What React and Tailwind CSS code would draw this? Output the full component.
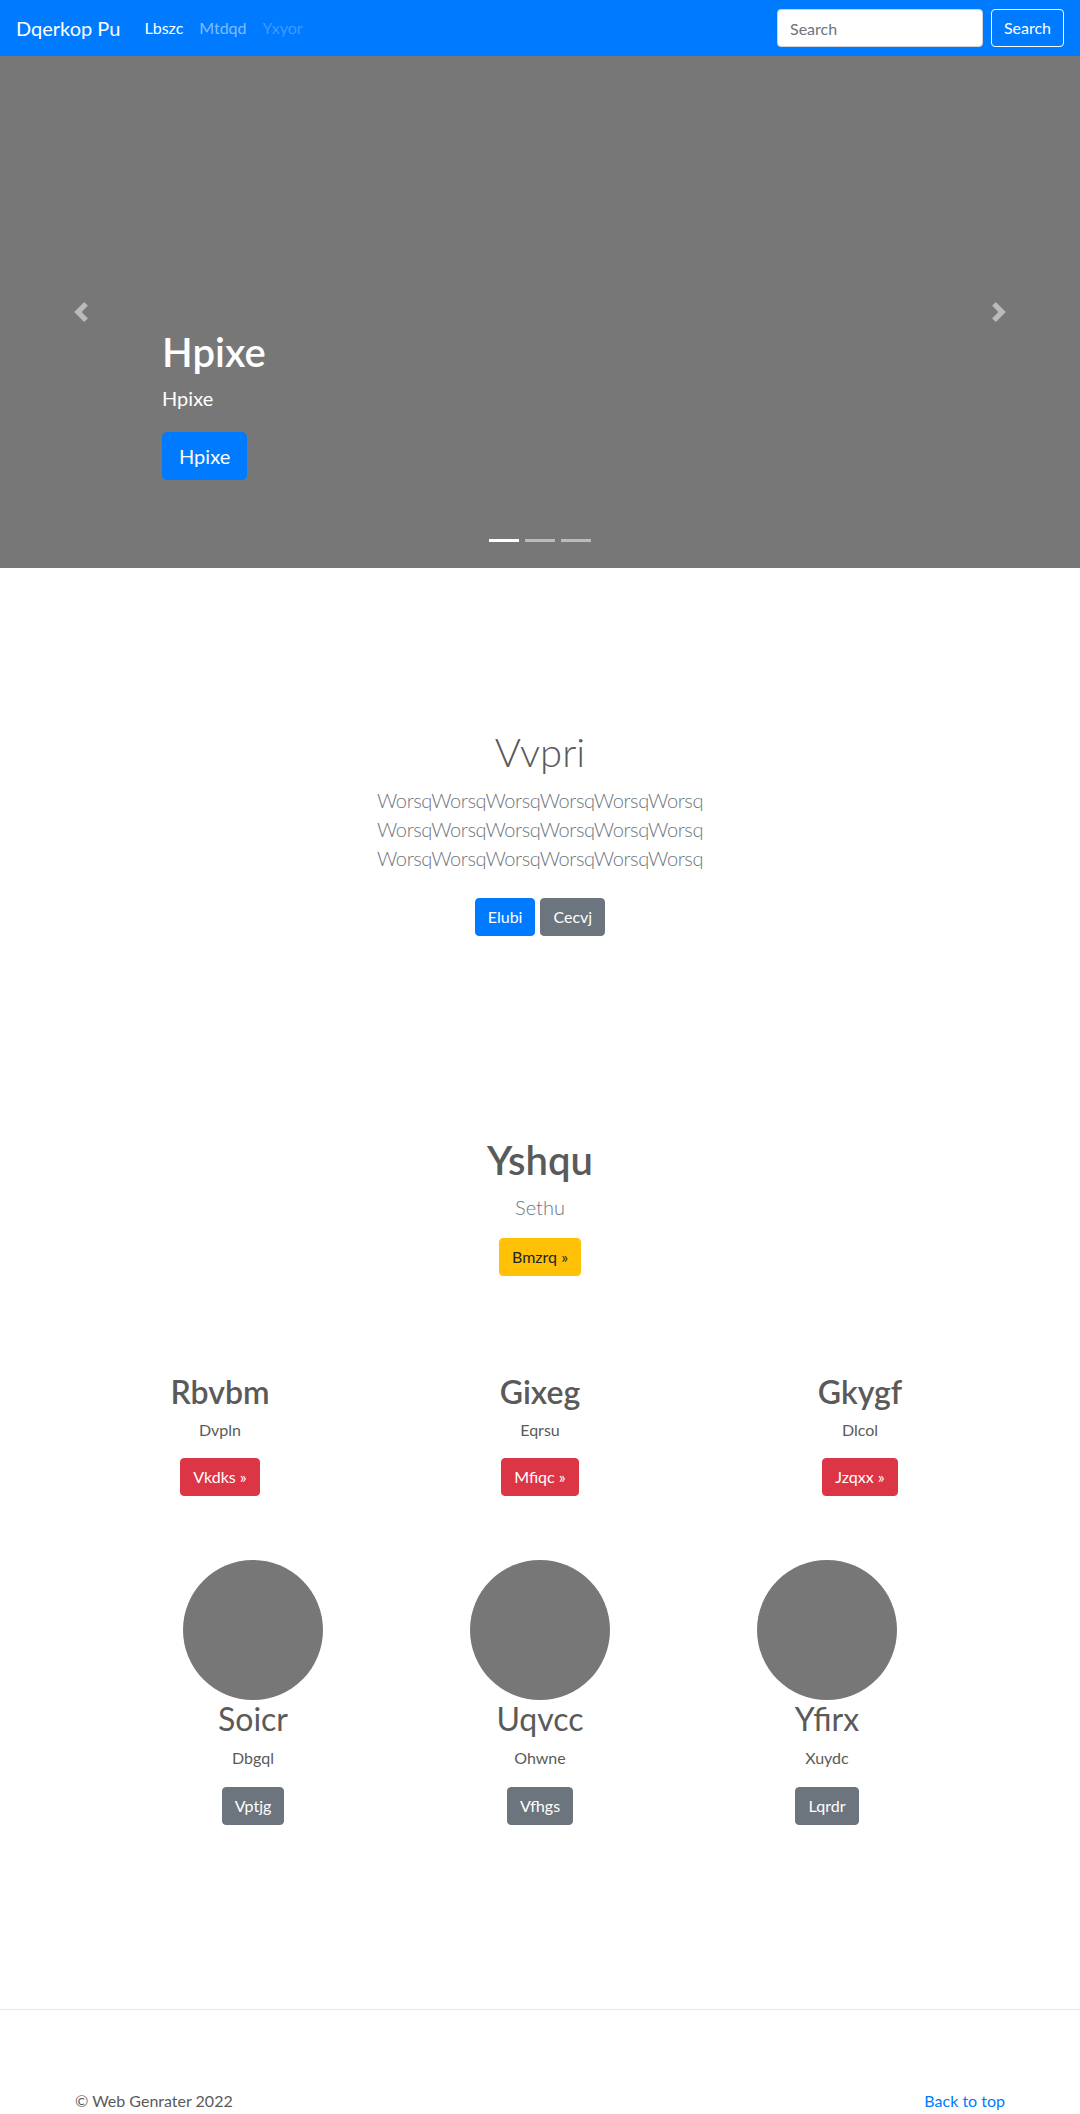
import React from 'react';

const slides = [0, 1, 2]

const features = [
  { title: 'Rbvbm', text: 'Dvpln', action: 'Vkdks »' },
  { title: 'Gixeg', text: 'Eqrsu', action: 'Mfiqc »' },
  { title: 'Gkygf', text: 'Dlcol', action: 'Jzqxx »' },
]

const people = [
  { name: 'Soicr', text: 'Dbgql', action: 'Vptjg' },
  { name: 'Uqvcc', text: 'Ohwne', action: 'Vfhgs' },
  { name: 'Yfirx', text: 'Xuydc', action: 'Lqrdr' },
]

const Chevron = ({ dir }) => (
  <svg width="20" height="20" viewBox="0 0 8 8" fill="#fff" className="opacity-50">
    {dir === 'prev'
      ? <path d="M5.25 0l-4 4 4 4 1.5-1.5L4.25 4l2.5-2.5L5.25 0z" />
      : <path d="M2.75 0l-1.5 1.5L3.75 4l-2.5 2.5L2.75 8l4-4-4-4z" />}
  </svg>
)

const App = () => {
  return (
    <div className="min-h-[2114px] bg-white font-['Lato',sans-serif] text-[#5a5a5a] overflow-hidden">

      {/* navbar */}
      <nav className="h-14 bg-[#007bff] flex items-center px-4">
        <a className="text-[20px] text-white mr-4">Dqerkop Pu</a>
        <ul className="flex text-base">
          <li><a className="px-2 text-white">Lbszc</a></li>
          <li><a className="px-2 text-white/50">Mtdqd</a></li>
          <li><a className="px-2 text-white/25">Yxyor</a></li>
        </ul>
        <form className="ml-auto flex items-center">
          <input
            placeholder="Search"
            className="w-[206px] h-[38px] rounded bg-white border border-[#ced4da] px-3 text-base text-[#495057] placeholder:text-[#6c757d] mr-2 outline-none"
          />
          <button type="button" className="h-[38px] w-[73px] border border-white rounded text-white text-base">Search</button>
        </form>
      </nav>

      {/* carousel */}
      <div className="relative h-[512px] bg-[#777]">
        <div className="pt-[272px] pl-[162px] text-white">
          <h1 className="text-[40px] leading-[48px] font-semibold">Hpixe</h1>
          <p className="mt-[7px] text-[20px] leading-[30px]">Hpixe</p>
          <a className="mt-[19px] inline-block h-12 px-4 py-2 text-[20px] leading-[30px] bg-[#007bff] border border-[#007bff] rounded-[5px] text-white">Hpixe</a>
        </div>
        <div className="absolute left-[71px] top-[246px]"><Chevron dir="prev" /></div>
        <div className="absolute right-[71px] top-[246px]"><Chevron dir="next" /></div>
        <div className="absolute left-0 right-0 bottom-[26px] flex justify-center gap-[6px]">
          {slides.map(i => (
            <span key={i} className={`w-[30px] h-[3px] ${i === 0 ? 'bg-white' : 'bg-white/50'}`} />
          ))}
        </div>
      </div>

      {/* jumbotron */}
      <section className="text-center pt-[160px]">
        <h1 className="text-[40px] leading-[48px] font-light">Vvpri</h1>
        <p className="mt-[10px] text-[20px] leading-[29px] font-light tracking-[-0.02em] text-[#6c757d]">
          WorsqWorsqWorsqWorsqWorsqWorsq<br />
          WorsqWorsqWorsqWorsqWorsqWorsq<br />
          WorsqWorsqWorsqWorsqWorsqWorsq
        </p>
        <div className="mt-[25px] flex justify-center gap-[5px]">
          <a className="h-[38px] px-3 py-[6px] leading-6 text-base text-white bg-[#007bff] border border-[#007bff] rounded">Elubi</a>
          <a className="h-[38px] px-3 py-[6px] leading-6 text-base text-white bg-[#6c757d] border border-[#6c757d] rounded">Cecvj</a>
        </div>
      </section>

      {/* featurette */}
      <section className="text-center mt-[200px]">
        <h1 className="text-[40px] leading-[48px] font-semibold">Yshqu</h1>
        <p className="mt-[8px] text-[20px] leading-[30px] font-light text-[#6c757d]">Sethu</p>
        <a className="mt-4 inline-block h-[38px] px-3 py-[6px] leading-6 text-base text-[#212529] bg-[#ffc107] border border-[#ffc107] rounded">Bmzrq »</a>
      </section>

      {/* three columns */}
      <div className="w-[960px] mx-auto mt-[97px] grid grid-cols-3 text-center">
        {features.map(f => (
          <div key={f.title} className="flex flex-col items-center">
            <h2 className="text-[32px] leading-[38px] font-semibold">{f.title}</h2>
            <p className="mt-[7px] text-base leading-6">{f.text}</p>
            <a className="mt-4 h-[38px] px-3 py-[6px] leading-6 text-base text-white bg-[#dc3545] border border-[#dc3545] rounded">{f.action}</a>
          </div>
        ))}
      </div>

      {/* marketing */}
      <div className="w-[861px] mx-auto mt-16 grid grid-cols-3 text-center">
        {people.map(p => (
          <div key={p.name} className="flex flex-col items-center">
            <div className="w-[140px] h-[140px] rounded-full bg-[#777]" />
            <h2 className="text-[32px] leading-[38px] font-normal">{p.name}</h2>
            <p className="mt-2 text-base leading-6">{p.text}</p>
            <a className="mt-[17px] h-[38px] px-3 py-[6px] leading-6 text-base text-white bg-[#6c757d] border border-[#6c757d] rounded">{p.action}</a>
          </div>
        ))}
      </div>

      <hr className="mt-[184px] border-0 border-t border-[#e6e6e6]" />

      {/* footer */}
      <footer className="w-[930px] mx-auto mt-[79px] flex justify-between text-base leading-6">
        <p>© Web Genrater 2022</p>
        <a className="text-[#007bff]">Back to top</a>
      </footer>
    </div>
  )
}

export default App;
